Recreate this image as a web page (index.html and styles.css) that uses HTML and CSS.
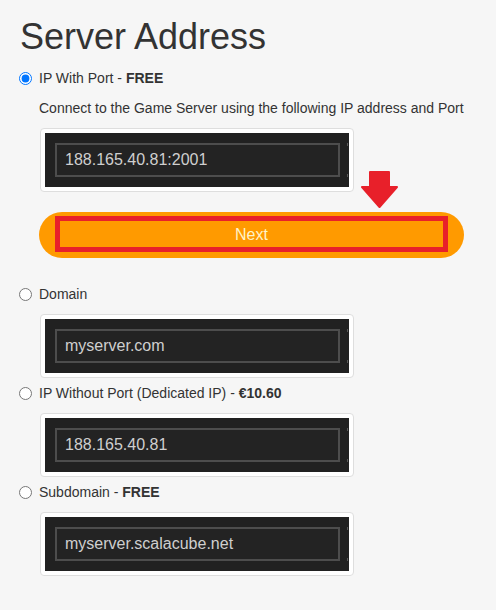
FILE: index.html
```html
<!DOCTYPE html>
<html lang="en">
<head>
<meta charset="utf-8">
<title>Server Address</title>
<link rel="stylesheet" href="styles.css">
</head>
<body>
<div class="page">
  <h1 class="title">Server Address</h1>

  <label class="option">
    <input type="radio" name="addr" class="radio" checked>
    <span>IP With Port - <b>FREE</b></span>
  </label>
  <p class="desc">Connect to the Game Server using the following IP address and Port</p>
  <div class="shot"><div class="dark"><div class="field">188.165.40.81:2001</div></div></div>

  <div class="next-wrap">
    <svg class="arrow" width="37" height="37" viewBox="0 0 37 37" aria-hidden="true">
      <path d="M9 1 H28 V16 H36 L18.5 36 L1 16 H9 Z" fill="#e8202a" stroke="#e8202a" stroke-width="2" stroke-linejoin="round"/>
    </svg>
    <div class="next-box">Next</div>
  </div>

  <label class="option option-first">
    <input type="radio" name="addr" class="radio">
    <span>Domain</span>
  </label>
  <div class="shot"><div class="dark"><div class="field">myserver.com</div></div></div>

  <label class="option">
    <input type="radio" name="addr" class="radio">
    <span>IP Without Port (Dedicated IP) - <b>€10.60</b></span>
  </label>
  <div class="shot"><div class="dark"><div class="field">188.165.40.81</div></div></div>

  <label class="option">
    <input type="radio" name="addr" class="radio">
    <span>Subdomain - <b>FREE</b></span>
  </label>
  <div class="shot"><div class="dark"><div class="field">myserver.scalacube.net</div></div></div>
</div>
</body>
</html>
```

FILE: styles.css
```css
html, body {
  margin: 0;
  padding: 0;
  background: #f6f6f6;
}

body {
  font-family: "Liberation Sans", Arial, sans-serif;
  color: #333333;
  font-size: 14px;
}

.page {
  padding: 17px 0 0 19px;
  display: flex;
  flex-direction: column;
  align-items: flex-start;
}

.title {
  margin: 0 0 0 1px;
  font-size: 36px;
  line-height: 40px;
  font-weight: normal;
  color: #333333;
}

.option {
  display: flex;
  align-items: center;
  height: 20px;
  line-height: 20px;
  margin-top: 5px;
  font-size: 14px;
}

.title + .option {
  margin-top: 11px;
}

.option-first {
  margin-top: 26px;
}

.radio {
  width: 13px;
  height: 13px;
  margin: 0 7px 0 0;
}

.desc {
  margin: 10px 0 0 20px;
  line-height: 20px;
  font-size: 14px;
}

.shot {
  box-sizing: border-box;
  width: 314px;
  height: 64px;
  margin: 10px 0 0 21px;
  padding: 4px;
  background: #ffffff;
  border: 1px solid #dedede;
  border-radius: 4px;
}

.dark {
  height: 54px;
  background: #212121;
  padding: 10px;
  box-sizing: border-box;
  position: relative;
}

.dark::before,
.dark::after {
  content: "";
  position: absolute;
  right: 1px;
  width: 1px;
  height: 3px;
  background: #5a5a5a;
}

.dark::before { top: 10px; }
.dark::after { bottom: 10px; }

.field {
  box-sizing: border-box;
  width: 285px;
  height: 34px;
  border: 2px solid #4d4d4d;
  background: #232323;
  color: #cfcfcf;
  font-size: 16px;
  line-height: 30px;
  padding-left: 8px;
}

.next-wrap {
  position: relative;
  box-sizing: border-box;
  width: 425px;
  height: 46px;
  margin: 20px 0 0 20px;
  padding: 4px 16px 6px 16px;
  background: #ff9a00;
  border-radius: 23px;
}

.next-box {
  box-sizing: border-box;
  height: 36px;
  border: 5px solid #e8202a;
  color: #fff3c8;
  font-size: 16px;
  line-height: 28px;
  text-align: center;
}

.arrow {
  position: absolute;
  left: 322px;
  top: -41px;
}
```
